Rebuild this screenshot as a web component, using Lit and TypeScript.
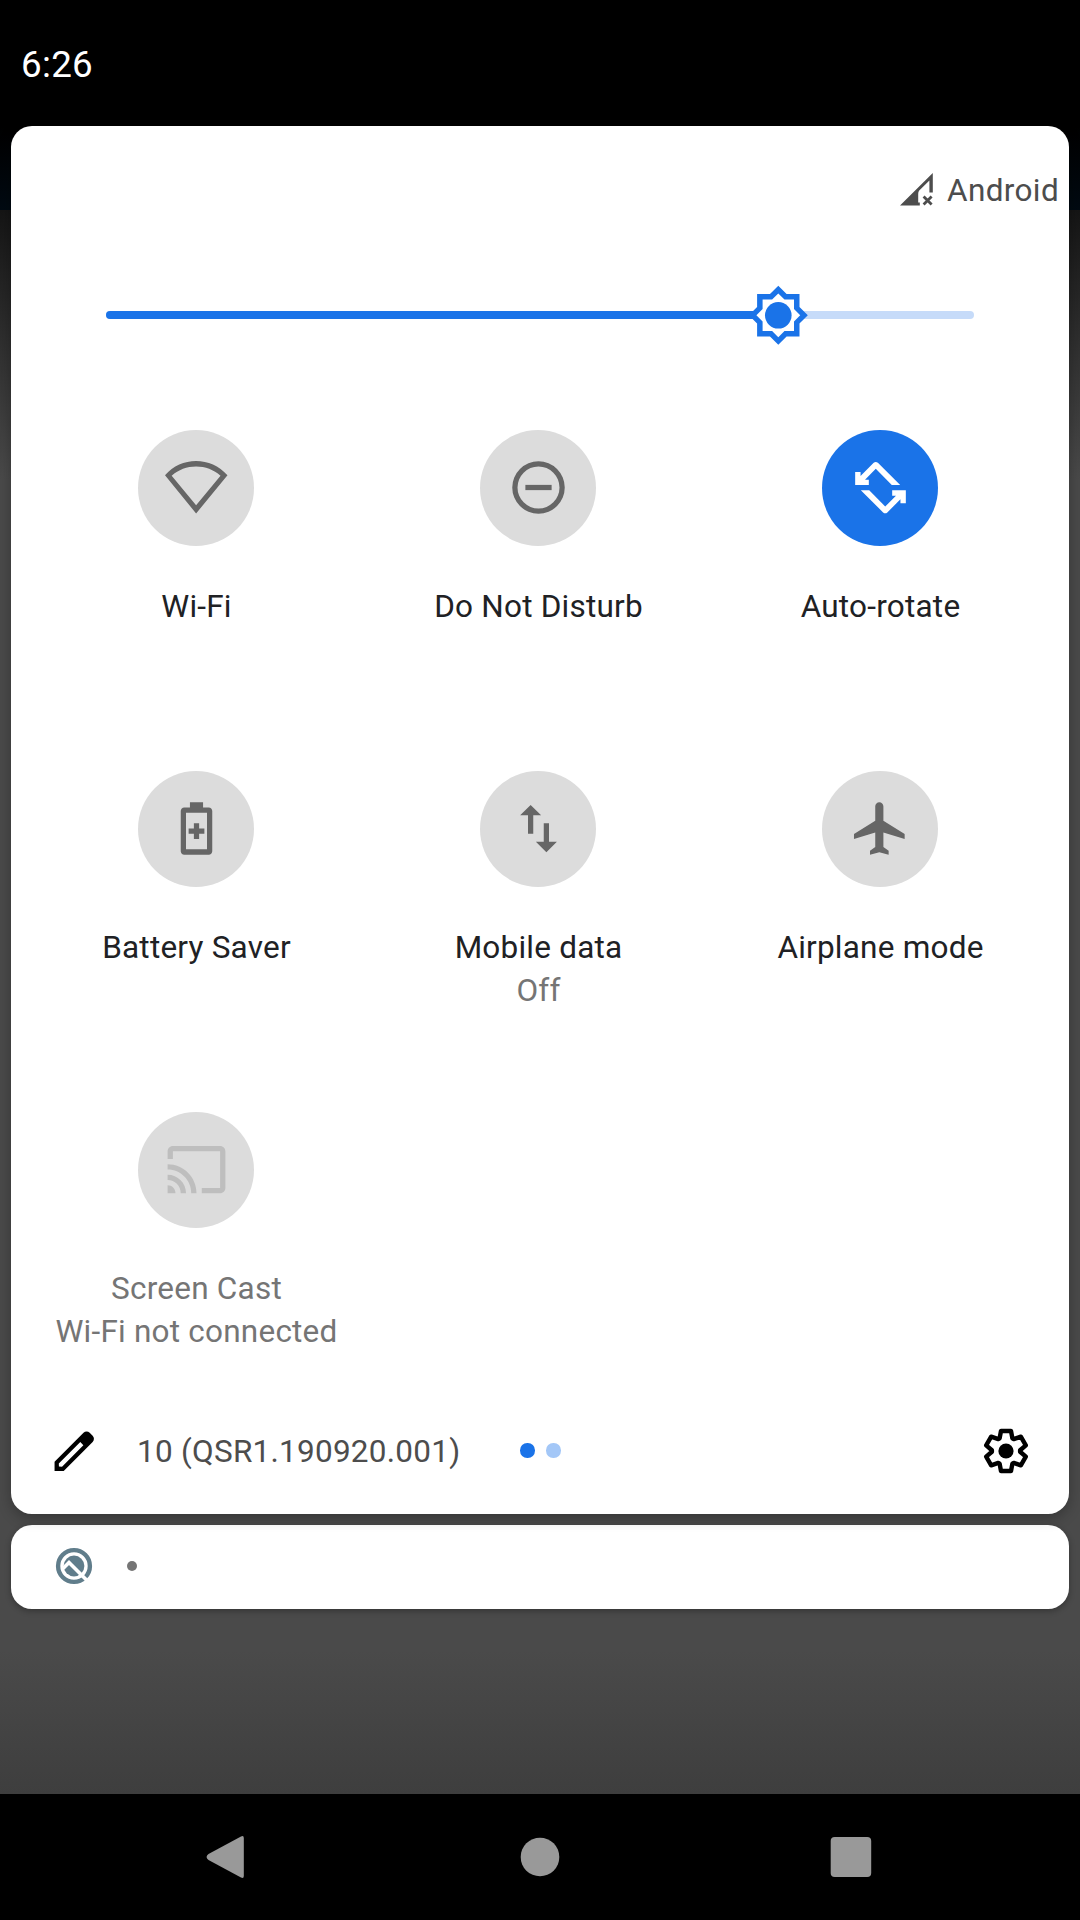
import { LitElement, html, svg, css, nothing, type SVGTemplateResult } from "lit";
import { customElement, property } from "lit/decorators.js";
import { classMap } from "lit/directives/class-map.js";

interface Tile {
  icon: string;
  label: string;
  detail?: string;
  state: "off" | "on" | "unavailable";
}

const ICONS: Record<string, SVGTemplateResult> = {
  wifi: svg`<path transform="translate(-0.15 0)" fill-rule="evenodd" d="M12 21.9L23.95 7.35C20.7 3.8 16.5 1.95 12 1.95S3.3 3.8 0.15 7.35zM12 18.75L2.7 7.5C5.3 5.2 8.5 4 12 4s6.7 1.2 9.3 3.5z"/>`,
  dnd: svg`<path fill-rule="evenodd" d="M12 2a10 10 0 1 0 0 20a10 10 0 0 0 0-20zm0 18a8 8 0 1 1 0-16a8 8 0 0 1 0 16z"/><path d="M7 11h10v2H7z"/>`,
  rotate: svg`<path d="M19.5 11.05L11 2.6Q10.2 1.9 9.4 2.6L4.4 7.6V6.1H2.35V11.05H7.55V9H6.1L10.2 4.9L16.3 11.05Z"/><path transform="rotate(180 12 12.05)" d="M19.5 11.05L11 2.6Q10.2 1.9 9.4 2.6L4.4 7.6V6.1H2.35V11.05H7.55V9H6.1L10.2 4.9L16.3 11.05Z"/>`,
  battery: svg`<path fill-rule="evenodd" d="M16.67 4H14.5V2h-5v2H7.33C6.6 4 6 4.6 6 5.33v15.34C6 21.4 6.6 22 7.33 22h9.33c.74 0 1.34-.6 1.34-1.33V5.33C18 4.6 17.4 4 16.67 4zM16 19.9H8V6h8z"/><path d="M11 10v2H9v2h2v2h2v-2h2v-2h-2v-2z"/>`,
  data: svg`<path d="M16 17.01V10h-2v7.01h-3L15 21l4-3.99h-3zM9 3L5 6.99h3V14h2V6.99h3L9 3z"/>`,
  airplane: svg`<path d="M21.2 16v-1.9L13.1 9V3.5c0-.83-.7-1.5-1.55-1.5S10 2.67 10 3.5V9l-8.1 5.1V16l8.1-2.5V19l-2 1.5V22l3.55-1 3.55 1v-1.5L13.1 19v-5.5z"/>`,
  cast: svg`<path d="M21 3H3c-1.1 0-2 .9-2 2v3h2V5h18v14h-7v2h7c1.1 0 2-.9 2-2V5c0-1.1-.9-2-2-2zM1 18v3h3c0-1.66-1.34-3-3-3zm0-4v2c2.76 0 5 2.24 5 5h2c0-3.87-3.13-7-7-7zm0-4v2c4.97 0 9 4.03 9 9h2c0-6.08-4.93-11-11-11z"/>`,
};

const TILES: Tile[] = [
  { icon: "wifi", label: "Wi-Fi", state: "off" },
  { icon: "dnd", label: "Do Not Disturb", state: "off" },
  { icon: "rotate", label: "Auto-rotate", state: "on" },
  { icon: "battery", label: "Battery Saver", state: "off" },
  { icon: "data", label: "Mobile data", detail: "Off", state: "off" },
  { icon: "airplane", label: "Airplane mode", state: "off" },
  { icon: "cast", label: "Screen Cast", detail: "Wi-Fi not connected", state: "unavailable" },
];

/* Outline of a six-toothed gear centred on the origin. */
function gearOutline(): string {
  const tooth = [
    [-6.4, -12.6], [-5, -20], [5, -20], [6.4, -12.6],
  ];
  const points: string[] = [];
  for (let i = 0; i < 6; i++) {
    const a = (i * Math.PI) / 3;
    for (const [x, y] of tooth) {
      const px = x * Math.cos(a) - y * Math.sin(a);
      const py = x * Math.sin(a) + y * Math.cos(a);
      points.push(`${px.toFixed(2)} ${py.toFixed(2)}`);
    }
  }
  return `M${points.join("L")}Z`;
}

@customElement("qs-tile")
export class QsTile extends LitElement {
  @property({ attribute: false }) tile!: Tile;

  static styles = css`
    :host { display: block; }
    .tile { display: flex; flex-direction: column; align-items: center; color: #202124; }
    .disc {
      box-sizing: border-box;
      width: 116px;
      height: 116px;
      padding-top: 26px;
      border-radius: 50%;
      background: #dcdcdc;
      display: flex;
      justify-content: center;
      align-items: flex-start;
    }
    .glyph { width: 63px; height: 63px; fill: #666; display: block; }
    .label { margin-top: 39px; }
    .label, .detail { padding-left: 1px; font-size: 31.5px; line-height: 43px; letter-spacing: 0.22px; white-space: nowrap; }
    .detail { color: #757575; }
    .on .disc { background: #1a73e8; }
    .on .glyph { fill: #fff; }
    .unavailable .glyph { fill: #bebebe; }
    .unavailable .label { color: #757575; }
  `;

  render() {
    const t = this.tile;
    return html`
      <div class=${classMap({ tile: true, [t.state]: true })}>
        <div class="disc"><svg class="glyph" viewBox="0 0 24 24">${ICONS[t.icon]}</svg></div>
        <div class="label">${t.label}</div>
        ${t.detail ? html`<div class="detail">${t.detail}</div>` : nothing}
      </div>
    `;
  }
}

@customElement("brightness-slider")
export class BrightnessSlider extends LitElement {
  @property({ type: Number }) value = 50;

  static styles = css`
    :host { display: block; }
    .track { position: relative; height: 8px; border-radius: 4px; background: #c6dbf9; }
    .fill { height: 8px; border-radius: 4px; background: #1a73e8; }
    .thumb { position: absolute; top: -26px; width: 60px; height: 60px; margin-left: -30px; display: block; }
  `;

  render() {
    return html`
      <div class="track">
        <div class="fill" style="width:${this.value}%"></div>
        <svg class="thumb" style="left:${this.value}%" viewBox="-30 -30 60 60">
          <g transform="translate(0.3 0.3)">
            <path fill="#1a73e8" d="M0-29.5L8.3-21.2H21.2V-8.3L29.5 0L21.2 8.3V21.2H8.3L0 29.5L-8.3 21.2H-21.2V8.3L-29.5 0L-21.2-8.3V-21.2H-8.3Z"/>
            <path fill="#fff" d="M0-21.9L6.2-15.7H15.7V-6.2L21.9 0L15.7 6.2V15.7H6.2L0 21.9L-6.2 15.7H-15.7V6.2L-21.9 0L-15.7-6.2V-15.7H-6.2Z"/>
            <circle r="13.3" fill="#1a73e8"/>
          </g>
        </svg>
      </div>
    `;
  }
}

@customElement("app-root")
export class AppRoot extends LitElement {
  static styles = css`
    :host {
      display: block;
      width: 1080px;
      height: 1920px;
      overflow: hidden;
      font-family: Roboto, "Liberation Sans", sans-serif;
    }
    .screen {
      height: 1920px;
      display: flex;
      flex-direction: column;
      background:
        linear-gradient(#000 0, #000 126px, #000a12 210px, transparent 210px),
        linear-gradient(#151515 210px, #4a4a4a 480px, #4a4a4a 1650px, #3e3e3e 1794px);
    }
    .status { box-sizing: border-box; height: 126px; padding: 43px 0 0 21px; color: #fff; font-size: 36.75px; line-height: 44px; letter-spacing: 0.3px; }
    .shade { flex: 1; padding: 0 11px; display: flex; flex-direction: column; gap: 11px; }
    .panel {
      position: relative;
      box-sizing: border-box;
      height: 1388px;
      border-radius: 21px;
      background: #fff;
      box-shadow: 0 4px 14px rgba(0, 0, 0, 0.28);
      display: flex;
      flex-direction: column;
    }
    .carrier { flex: none; height: 127px; padding-right: 10px; display: flex; justify-content: flex-end; align-items: center; gap: 14px; color: #4d4d4d; font-size: 31.5px; letter-spacing: 0.35px; }
    .operator { padding-top: 2px; }
    .signal { width: 33px; height: 33px; fill: #4d4d4d; display: block; }
    .brightness { margin: 58px 95px 0; }
    .tiles { margin: 111px 14px 0; display: grid; grid-template-columns: repeat(3, 342px); grid-template-rows: 341px 341px auto; }
    .footer { flex: none; margin-top: auto; height: 126px; padding: 0 35px 0 37px; display: flex; align-items: center; color: #4d4d4d; }
    .edit { width: 52.5px; height: 52.5px; fill: #000; display: block; }
    .build { margin-left: 36.5px; padding-top: 2px; width: 383px; font-size: 31.5px; line-height: 40px; white-space: nowrap; letter-spacing: 0.25px; }
    .dots { display: flex; gap: 11.5px; flex: 1; padding-bottom: 1px; }
    .dot { width: 14.5px; height: 14.5px; border-radius: 50%; background: #a3c7f7; }
    .dot.current { background: #1a73e8; }
    .gear { width: 56px; height: 56px; display: block; }
    .notice { box-sizing: border-box; height: 84px; padding: 0 43px 2px; border-radius: 21px; background: #fff; box-shadow: 0 2px 6px rgba(0, 0, 0, 0.3); display: flex; align-items: center; gap: 33px; }
    .badge { width: 40px; height: 40px; display: block; }
    .bullet { width: 10px; height: 10px; border-radius: 50%; background: #757575; }
    .nav { height: 126px; background: #000; display: block; fill: #999; }
  `;

  render() {
    return html`
      <div class="screen">
        <div class="status">6:26</div>
        <div class="shade">
          <section class="panel">
            <div class="carrier">
              <svg class="signal" viewBox="0 0 33 33">
                <path d="M0 32.6L32.8 0V19.6H29.4V7.4L19 17.8Q18.2 19 18.2 21V29.6H19.8V32.6Z"/>
                <path d="M23.6 23.6L31.6 31.6M31.6 23.6L23.6 31.6" stroke="#4d4d4d" stroke-width="2.8"/>
              </svg>
              <span class="operator">Android</span>
            </div>
            <brightness-slider class="brightness" value="77.42"></brightness-slider>
            <div class="tiles">${TILES.map((t) => html`<qs-tile .tile=${t}></qs-tile>`)}</div>
            <div class="footer">
              <svg class="edit" viewBox="0 0 24 24">
                <path d="M20.41 4.94l-1.35-1.35c-.78-.78-2.05-.78-2.83 0L3 16.82V21h4.18L20.41 7.77c.79-.78.79-2.05 0-2.83zm-14 14.12L5 19l-.06-1.36 9.82-9.82 1.41 1.41-9.76 9.83z"/>
              </svg>
              <div class="build">10 (QSR1.190920.001)</div>
              <div class="dots"><i class="dot current"></i><i class="dot"></i></div>
              <svg class="gear" viewBox="-28 -28 56 56">
                <path d=${gearOutline()} fill="none" stroke="#000" stroke-width="4.4" stroke-linejoin="round"/>
                <circle r="7.6"/>
              </svg>
            </div>
          </section>
          <section class="notice">
            <svg class="badge" viewBox="-20 -20 40 40">
              <circle r="15.9" fill="none" stroke="#607d8b" stroke-width="4.4"/>
              <circle r="10.4" fill="#607d8b"/>
              <path d="M-11 2.6L-5 -3.4L14.5 16.1" fill="none" stroke="#fff" stroke-width="3.6"/>
            </svg>
            <span class="bullet"></span>
          </section>
        </div>
        <svg class="nav" viewBox="0 0 1080 126">
          <path d="M241 42.4Q243.8 41 243.8 44V82Q243.8 85 241 83.6L208.5 66Q204.6 63 208.5 60Z"/>
          <circle cx="540" cy="63" r="19.3"/>
          <rect x="830.7" y="43" width="40.5" height="40" rx="4"/>
        </svg>
      </div>
    `;
  }
}
